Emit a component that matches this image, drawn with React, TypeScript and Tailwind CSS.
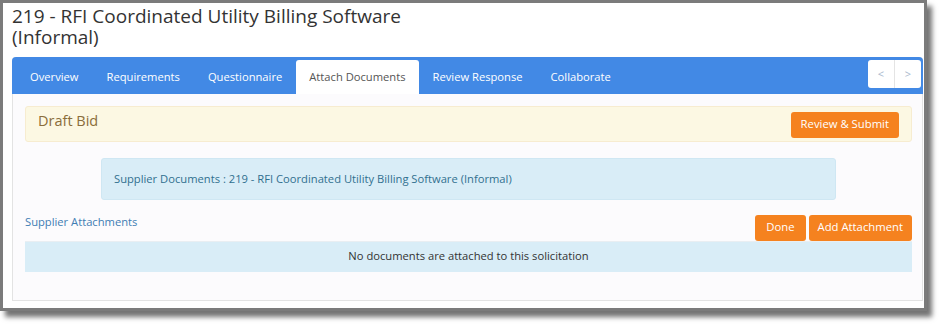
const tabs = [
  "Overview",
  "Requirements",
  "Questionnaire",
  "Attach Documents",
  "Review Response",
  "Collaborate",
];

const App = () => {
  return (
    <div className="h-[326px] w-[943px] bg-white font-['Open_Sans',sans-serif]">
      <div className="h-[311px] w-[927px] border-[3px] border-[#7b7b7b] bg-white pl-[9px] pr-px pt-[3px] shadow-[5px_6px_5px_rgba(0,0,0,0.55)]">
        <h1 className="text-[19px] leading-[21px] text-[#333]">
          219 - RFI Coordinated Utility Billing Software
          <br />
          (Informal)
        </h1>
        <div className="mt-[9px] h-[244px] rounded-t-[4px] border border-t-0 border-[#e3e3e3] bg-[#fcfbfd]">
          <div className="-mx-px flex h-[37px] items-end rounded-t-[4px] bg-[#4289e5] pl-[4px] pr-[2px]">
            {tabs.map((t) => (
              <div
                key={t}
                className={
                  t === "Attach Documents"
                    ? "flex h-[34px] items-center rounded-t-[3px] bg-white px-[13px] text-[11.2px] text-[#555]"
                    : "flex h-[34px] items-center px-[14px] text-[11.2px] text-white"
                }
              >
                {t}
              </div>
            ))}
            <div className="mb-[6px] ml-auto flex h-[28px] w-[53px] rounded-[3px] bg-white text-[11px] text-[#a9b8cc]">
              <span className="flex flex-1 items-center justify-center border-r border-[#e4e4e4]">
                &lt;
              </span>
              <span className="flex flex-1 items-center justify-center">&gt;</span>
            </div>
          </div>

          <div className="pl-[12px] pr-[10px] pt-[12px]">
            <div className="flex h-[36px] items-center justify-between rounded-[3px] border border-[#f7ecd0] bg-[#fcf8e3] pl-[12px] pr-[12px]">
              <span className="-mt-[6px] text-[14.5px] text-[#8a6d3b]">Draft Bid</span>
              <button className="mt-px h-[26px] rounded-[3px] bg-[#f5821f] px-[10px] text-[11.3px] text-white">
                Review &amp; Submit
              </button>
            </div>

            <div className="ml-[76px] mr-[76px] mt-[16px] flex h-[42px] items-center rounded-[3px] border border-[#cfe7f3] bg-[#d9edf7] px-[12px] text-[11.2px] text-[#31708f]">
              Supplier Documents : 219 - RFI Coordinated Utility Billing Software (Informal)
            </div>

            <div className="mt-[14px] flex items-end justify-between">
              <span className="mb-[10px] text-[11.2px] text-[#3f7db3]">Supplier Attachments</span>
              <div className="flex gap-[3px]">
                <button className="h-[26px] rounded-[3px] bg-[#f5821f] px-[11px] text-[11.3px] text-white">
                  Done
                </button>
                <button className="h-[26px] rounded-[3px] bg-[#f5821f] px-[9px] text-[11.3px] text-white">
                  Add Attachment
                </button>
              </div>
            </div>
            <div className="flex h-[31px] items-center justify-center border-t border-[#e9eef2] bg-[#d9edf7] text-[11.2px] text-[#333]">
              No documents are attached to this solicitation
            </div>
          </div>
        </div>
      </div>
    </div>
  );
};

export default App;
